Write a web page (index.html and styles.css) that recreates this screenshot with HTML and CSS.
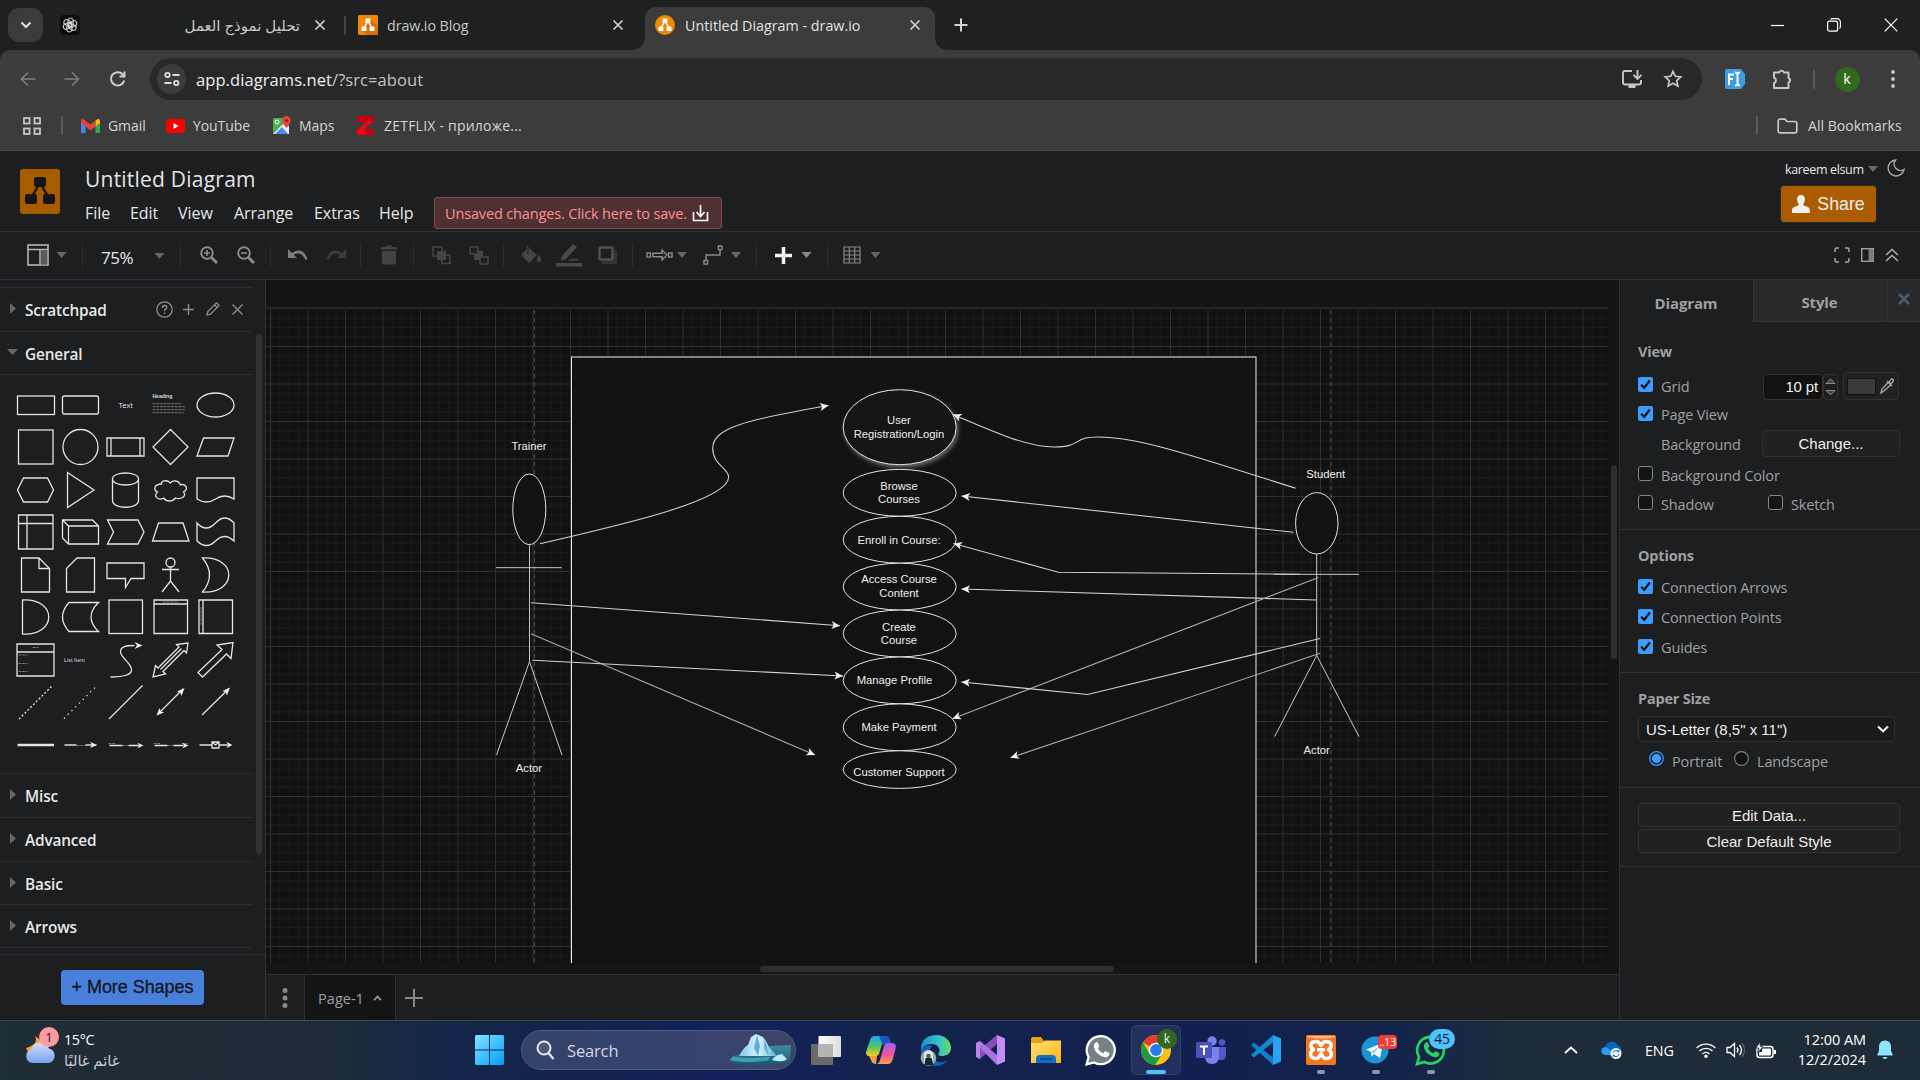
FILE: index.html
```html
<!DOCTYPE html>
<html lang="en">
<head>
<meta charset="utf-8">
<title>Untitled Diagram - draw.io</title>
<link rel="stylesheet" href="styles.css">
</head>
<body>
<svg class="defs" aria-hidden="true">
  <symbol id="x" viewBox="0 0 12 12"><path d="M1.500 1.500l9 9M10.500 1.500l-9 9" fill="none" stroke="currentColor" stroke-width="1.700"/></symbol>
  <symbol id="caret" viewBox="0 0 10 6"><path d="M0 0h10L5 6z" fill="currentColor"/></symbol>
  <symbol id="drawio" viewBox="0 0 20 20"><path d="M10 6L6 13M10 6l4 7" stroke="#fff" stroke-width="1.500"/><rect x="7.500" y="3.500" width="5" height="4.500" rx=".6" fill="#fff"/><rect x="3.500" y="11.500" width="5" height="4.500" rx=".6" fill="#fff"/><rect x="11.500" y="11.500" width="5" height="4.500" rx=".6" fill="#fff"/></symbol>
  <symbol id="check" viewBox="0 0 15 15"><rect width="15" height="15" rx="2" fill="#3d9dfd"/><path d="M3.200 7.800l3 3 5.600-7.300" fill="none" stroke="#111" stroke-width="2.200"/></symbol>
  <symbol id="uncheck" viewBox="0 0 15 15"><rect x=".5" y=".5" width="14" height="14" rx="2.500" fill="#141414" stroke="#858585"/></symbol>
  <symbol id="phone" viewBox="0 0 24 24"><path d="M8.200 6.400c.5-.5 1.100-.5 1.400.1l1 2.100c.2.4.1.8-.2 1.100l-.7.9c.9 1.800 2.200 3 4.100 3.800l.9-1.100c.3-.4.7-.4 1.100-.2l2 1c.5.3.6.7.4 1.200-.6 1.700-2.100 2.400-3.800 2-4-1-6.700-3.600-7.700-7.300-.4-1.500.4-2.900 1.500-3.600z"/></symbol>
</svg>

<header class="tabstrip">
  <button class="tab-search"><svg width="12" height="8" viewBox="0 0 12 8"><path d="M1.500 1.500L6 6l4.500-4.500" fill="none" stroke="#e3e3e3" stroke-width="2"/></svg></button>
  <div class="tab tab-gpt">
    <svg width="20" height="20" viewBox="0 0 20 20"><rect width="20" height="20" rx="4" fill="#0c0c0c"/><g fill="none" stroke="#d8d8d8" stroke-width="1"><rect x="8" y="3" width="5.200" height="8.500" rx="2.600"/><rect x="8" y="3" width="5.200" height="8.500" rx="2.600" transform="rotate(60 10 10)"/><rect x="8" y="3" width="5.200" height="8.500" rx="2.600" transform="rotate(120 10 10)"/><rect x="8" y="3" width="5.200" height="8.500" rx="2.600" transform="rotate(180 10 10)"/><rect x="8" y="3" width="5.200" height="8.500" rx="2.600" transform="rotate(240 10 10)"/><rect x="8" y="3" width="5.200" height="8.500" rx="2.600" transform="rotate(300 10 10)"/></g></svg>
    <span class="tab-title" dir="rtl" lang="ar">تحليل نموذج العمل</span>
    <svg class="close" width="12" height="12"><use href="#x"/></svg>
  </div>
  <div class="tab tab-blog">
    <svg width="20" height="20" viewBox="0 0 20 20"><rect width="20" height="20" rx="1.500" fill="#f08705"/><path d="M12 4l8 7v9H9l-5-4z" fill="#df6c0c"/><use href="#drawio"/></svg>
    <span class="tab-title">draw.io Blog</span>
    <svg class="close" width="12" height="12"><use href="#x"/></svg>
  </div>
  <div class="tab tab-active">
    <svg width="20" height="20" viewBox="0 0 20 20"><circle cx="10" cy="10" r="10" fill="#f08705"/><use href="#drawio"/></svg>
    <span class="tab-title">Untitled Diagram - draw.io</span>
    <svg class="close" width="12" height="12"><use href="#x"/></svg>
  </div>
  <svg class="mid" width="14" height="14" viewBox="0 0 14 14"><path d="M7 .5v13M.5 7h13" stroke="#d5d5d5" stroke-width="2"/></svg>
  <i></i>
  <svg class="mid" width="13" height="13" viewBox="0 0 13 13"><path d="M0 6.500h13" stroke="#fff" stroke-width="1.200"/></svg>
  <svg class="mid" width="14" height="14" viewBox="0 0 14 14"><rect x=".6" y="3.200" width="10" height="10" rx="2" fill="none" stroke="#fff" stroke-width="1.200"/><path d="M3.500 1.500q.5-.9 2-.9h4.500a3.400 3.400 0 0 1 3.400 3.400v4.500q0 1.500-1 2" fill="none" stroke="#fff" stroke-width="1.100"/></svg>
  <svg class="mid" width="14" height="14" viewBox="0 0 14 14"><path d="M.7.7l12.600 12.600M13.300.7L.7 13.300" stroke="#fff" stroke-width="1.200"/></svg>
</header>

<nav class="navbar">
  <svg width="16" height="16" viewBox="0 0 16 16"><path d="M15.500 8H1.500M8 1.500L1.500 8 8 14.500" fill="none" stroke="#7d7d7d" stroke-width="1.700"/></svg>
  <svg width="16" height="16" viewBox="0 0 16 16"><path d="M.5 8h14M8 1.500L14.500 8 8 14.500" fill="none" stroke="#7d7d7d" stroke-width="1.700"/></svg>
  <svg width="18" height="18" viewBox="0 0 18 18"><path d="M15.200 10.500a6.700 6.700 0 1 1-1.600-6.200L15.500 6.500M15.500 1.500v5h-5" fill="none" stroke="#d0d0d0" stroke-width="2"/></svg>
  <div class="omnibox">
    <span class="site-info"><svg width="16" height="16" viewBox="0 0 16 16"><g fill="none" stroke="#dcdcdc" stroke-width="1.800"><circle cx="3.500" cy="4" r="2.200"/><path d="M8.500 4h7M.5 12h7"/><circle cx="12.300" cy="12" r="2.200"/></g></svg></span>
    <span class="url"><b>app.diagrams.net</b>/?src=about</span>
    <svg width="22" height="20" viewBox="0 0 22 20"><path d="M11 2H4a2 2 0 0 0-2 2v9.500a2 2 0 0 0 2 2h14a2 2 0 0 0 2-2V11" fill="none" stroke="#c7c7c7" stroke-width="1.900"/><path d="M7.500 15.500h7V19h-7z" fill="#c7c7c7"/><path d="M16.500 1v8M12.500 5.800l4 4 4-4" fill="none" stroke="#c7c7c7" stroke-width="1.900"/></svg>
    <svg width="20" height="20" viewBox="0 0 20 20"><path d="M10 2.300l2.300 5 5.500.6-4.100 3.700 1.200 5.500L10 14.300l-4.900 2.800 1.200-5.500L2.200 7.900l5.500-.6z" fill="none" stroke="#c7c7c7" stroke-width="1.700"/></svg>
  </div>
  <svg width="22" height="22" viewBox="0 0 22 22"><path d="M3 1h14l4 5v10l-4 5H3a2 2 0 0 1-2-2V3a2 2 0 0 1 2-2z" fill="#3d9fe0"/><path d="M5 17V6.500h5M5 11h4M11 4.500q2.500 0 2.500 2v9q0 2-2.500 2M16 4.500q-2.500 0-2.500 2v9q0 2 2.500 2" fill="none" stroke="#fff" stroke-width="1.900"/></svg>
  <svg width="22" height="22" viewBox="0 0 22 22"><path d="M3 4.500h5.200a2.500 2.500 0 0 1 4.800 0h4.500V10a2.400 2.400 0 0 1 0 4.500v5.500H3v-5a2.700 2.700 0 0 0 0-5.200z" fill="none" stroke="#c7c7c7" stroke-width="2" stroke-linejoin="round"/></svg>
  <i class="vsep"></i>
  <span class="avatar">k</span>
  <svg width="4" height="18" viewBox="0 0 4 18" fill="#c7c7c7"><circle cx="2" cy="2" r="1.900"/><circle cx="2" cy="9" r="1.900"/><circle cx="2" cy="16" r="1.900"/></svg>
</nav>

<nav class="bookmarks">
  <svg class="apps" width="18" height="18" viewBox="0 0 18 18" fill="none" stroke="#c7c7c7" stroke-width="1.800"><rect x="1" y="1" width="5.500" height="5.500"/><rect x="11.500" y="1" width="5.500" height="5.500"/><rect x="1" y="11.500" width="5.500" height="5.500"/><rect x="11.500" y="11.500" width="5.500" height="5.500"/></svg>
  <i class="vsep"></i>
  <a class="bm"><svg width="19" height="14" viewBox="0 0 19 14"><path d="M0 2v11a1 1 0 0 0 1 1h3.500V5z" fill="#4285f4"/><path d="M19 2v11a1 1 0 0 1-1 1h-3.500V5z" fill="#34a853"/><path d="M14.500 1.500l2-1.300Q19-.5 19 2.200V4l-4.500 3.500z" fill="#fbbc04"/><path d="M0 2.200Q0-.5 2.500.2l7 5.300 5-4v6l-5 3.800L0 4z" fill="#ea4335"/></svg>Gmail</a>
  <a class="bm"><svg width="19" height="14" viewBox="0 0 19 14"><rect width="19" height="14" rx="4" fill="#f00"/><path d="M7.500 4v6l5-3z" fill="#fff"/></svg>YouTube</a>
  <a class="bm"><svg width="18" height="19" viewBox="0 0 18 19"><rect y="2" width="16" height="16" rx="1.500" fill="#4caf50"/><path d="M0 18L12 6l4 5v7z" fill="#eee"/><path d="M2 18l7-7 6 7z" fill="#4a8af4"/><circle cx="4" cy="6" r="2" fill="none" stroke="#fff"/><path d="M13.500 12Q9 7 9 4.500a4.400 4.400 0 0 1 8.800 0Q17.800 7 13.500 12z" fill="#e8453c"/><circle cx="13.500" cy="4.500" r="1.600" fill="#8e1b14"/></svg>Maps</a>
  <a class="bm zet"><svg width="17" height="19" viewBox="0 0 17 19"><path d="M0 0h17v5L7 13h10v6H0v-5l9-8H0z" fill="#f50514"/><path d="M0 0h17v5h-8v1H0zM7 13h10v6h-8z" fill="#c80010"/></svg>ZETFLIX - приложе...</a>
  <i></i>
  <i class="vsep"></i>
  <a class="bm all"><svg width="21" height="16" viewBox="0 0 21 16"><path d="M3 1.200h5l2 2.300h8a1.800 1.800 0 0 1 1.800 1.800V13a1.800 1.800 0 0 1-1.800 1.800H3A1.800 1.800 0 0 1 1.200 13V3A1.800 1.800 0 0 1 3 1.200z" fill="none" stroke="#c7c7c7" stroke-width="1.700"/></svg>All Bookmarks</a>
</nav>

<section class="apphead">
  <svg class="logo" width="40" height="45" viewBox="0 0 40 45"><rect width="40" height="45" rx="3" fill="#a85c00"/><path d="M20 14L11 29M20 14l9 15" stroke="#161616" stroke-width="2.400"/><rect x="14" y="8" width="12" height="10" rx="2" fill="#161616"/><rect x="5" y="25" width="12" height="10" rx="2" fill="#161616"/><rect x="23" y="25" width="12" height="10" rx="2" fill="#161616"/></svg>
  <div class="head-mid">
    <h1>Untitled Diagram</h1>
    <div class="menus">
      <span>File</span><span>Edit</span><span>View</span><span>Arrange</span><span>Extras</span><span>Help</span>
      <div class="unsaved"><span>Unsaved changes. Click here to save.</span><svg width="17" height="17" viewBox="0 0 17 17"><path d="M1.500 7v8.500h14V7M8.500 0v11M4.500 7l4 4.500 4-4.500" fill="none" stroke="#fff" stroke-width="1.600"/></svg></div>
    </div>
  </div>
  <div class="head-right">
    <div class="user"><span>kareem elsum</span><svg width="10" height="6" color="#6a6a6a"><use href="#caret"/></svg><svg class="moon" width="18" height="18" viewBox="0 0 18 18"><path d="M8.500 1A8 8 0 1 0 17 10.500 6.500 6.500 0 0 1 8.500 1z" fill="none" stroke="#a8a8a8" stroke-width="1.400"/></svg></div>
    <button class="share"><svg width="18" height="18" viewBox="0 0 18 18"><path d="M9 0c3 0 4.200 2.200 3.800 5-.3 2-.8 3-1.500 4 0 1.300.4 1.600 1.700 2 3 .9 5 1.300 5 5v2H0v-2c0-3.700 2-4.100 5-5 1.300-.4 1.700-.7 1.700-2-.7-1-1.200-2-1.500-4C4.800 2.200 6 0 9 0z" fill="#efefef"/></svg>Share</button>
  </div>
</section>

<section class="toolbar">
  <div class="tg g1"><svg width="22" height="22" viewBox="0 0 22 22"><rect x="1" y="1" width="20" height="20" fill="none" stroke="#b5b5b5" stroke-width="1.600"/><path d="M1 5.500h20M13 5.500V21" stroke="#b5b5b5" stroke-width="1.500"/><rect x="14" y="6" width="6" height="14.500" fill="#5c5c5c"/></svg><svg class="car" width="11" height="6"><use href="#caret"/></svg></div>
  <div class="tg g2"><span class="pct">75%</span><svg class="car" width="11" height="6"><use href="#caret"/></svg></div>
  <div class="tg g3"><svg width="18" height="18" viewBox="0 0 18 18" fill="none" stroke="#8c8c8c"><circle cx="7" cy="7" r="5.800" stroke-width="1.900"/><path d="M11.500 11.500l5.500 5.500" stroke-width="3"/><path d="M7 4v6M4 7h6" stroke-width="1.600"/></svg><svg width="18" height="18" viewBox="0 0 18 18" fill="none" stroke="#8c8c8c"><circle cx="7" cy="7" r="5.800" stroke-width="1.900"/><path d="M11.500 11.500l5.500 5.500" stroke-width="3"/><path d="M4 7h6" stroke-width="1.600"/></svg></div>
  <div class="tg g4"><svg width="20" height="12" viewBox="0 0 20 12"><path d="M0 0v9h9L5.700 5.700Q13 1 17.500 11l2-.7Q15-3 4 4z" fill="#7e7e7e"/></svg><svg width="20" height="12" viewBox="0 0 20 12"><path d="M20 0v9h-9l3.300-3.300Q7 1 2.500 11l-2-.7Q5-3 16 4z" fill="#3c3c3c"/></svg></div>
  <div class="tg g5"><svg width="18" height="20" viewBox="0 0 18 20" fill="#424242"><path d="M1 2h4.500L7 .5h4L12.500 2H17v2.500H1zM2 6h14v11.500q0 2-2 2H4q-2 0-2-2z"/></svg></div>
  <div class="tg g6"><svg width="20" height="19" viewBox="0 0 20 19"><path d="M1 1h9v9H1zM10 14v3.500h8V9h-4" fill="none" stroke="#454545" stroke-width="1.500"/><rect x="5" y="5" width="9" height="9" fill="#454545"/></svg><svg width="20" height="19" viewBox="0 0 20 19"><rect x="5" y="5" width="9" height="9" fill="#454545"/><path d="M1 1h8v7H1zM11 11h8v7h-8z" fill="#1d1e20" stroke="#454545" stroke-width="1.600"/></svg></div>
  <div class="tg g7"><svg width="22" height="20" viewBox="0 0 22 20"><path d="M7 0l2 3 8 7-8 8-8-8 6-6.500zM19 10q4.500 6 0 7.500-4.500-1.500 0-7.500z" fill="#454545"/><path d="M8 3v6" stroke="#1d1e20"/></svg><svg width="26" height="24" viewBox="0 0 26 24" fill="#4a4a4a"><path d="M17 1l4 3L10 16l-5 2 1-5z"/><path d="M14 16h8v1.500h-10z"/><path d="M0 20h26v3.500H0z"/></svg><svg width="19" height="18" viewBox="0 0 19 18"><rect x="4" y="4" width="15" height="14" fill="#333"/><rect x="1.500" y="1.500" width="13" height="12" rx="1" fill="#1d1e20" stroke="#505050" stroke-width="2.500"/></svg></div>
  <div class="tg g8"><svg width="27" height="12" viewBox="0 0 27 12" fill="none" stroke="#8a8a8a" stroke-width="1.400"><rect x="1" y="4" width="3.500" height="4"/><path d="M7 4.200h9V1l5 5-5 5V7.800H7z"/><rect x="22.500" y="4" width="3.500" height="4"/></svg><svg class="car" width="10" height="6"><use href="#caret"/></svg><i></i><svg width="20" height="20" viewBox="0 0 20 20" fill="none" stroke="#8a8a8a" stroke-width="1.400"><path d="M3 15.500V10h14V4.500"/><rect x="1" y="15.500" width="3.600" height="3.600"/><rect x="15.400" y="1" width="3.600" height="3.600"/></svg><svg class="car" width="10" height="6"><use href="#caret"/></svg></div>
  <div class="tg g9"><svg width="17" height="17" viewBox="0 0 17 17"><path d="M8.500 0v17M0 8.500h17" stroke="#f4f4f4" stroke-width="3.500"/></svg><svg class="car lit" width="11" height="6"><use href="#caret"/></svg></div>
  <div class="tg g10"><svg width="18" height="18" viewBox="0 0 18 18"><path d="M1 1h16v16H1zM6.300 1v16M11.700 1v16M1 5h16M1 9h16M1 13h16" fill="none" stroke="#858585" stroke-width="1.200"/></svg><svg class="car" width="11" height="6"><use href="#caret"/></svg></div>
  <div class="tool-end">
    <svg width="16" height="16" viewBox="0 0 16 16" fill="none" stroke="#a8a8a8" stroke-width="1.500"><path d="M1 5V2.500A1.500 1.500 0 0 1 2.500 1H5M11 1h2.500A1.500 1.500 0 0 1 15 2.500V5M15 11v2.500a1.500 1.500 0 0 1-1.500 1.500H11M5 15H2.500A1.500 1.500 0 0 1 1 13.500V11"/></svg>
    <svg width="13" height="14" viewBox="0 0 13 14"><rect x=".7" y=".7" width="11.600" height="12.600" fill="none" stroke="#a0a0a0" stroke-width="1.400"/><rect x="7.500" y="1" width="5" height="12" fill="#7c7c7c"/></svg>
    <svg width="14" height="14" viewBox="0 0 14 14"><path d="M1 7l6-5.500L13 7M1 13l6-5.500L13 13" fill="none" stroke="#b0b0b0" stroke-width="1.500"/></svg>
  </div>
</section>

<main class="work">
  <aside class="sidebar">
    <div class="palettes">
      <div class="row scratch"><svg class="tri" width="6" height="11" viewBox="0 0 6 11"><path d="M0 0l6 5.500L0 11z"/></svg><span>Scratchpad</span>
        <svg width="17" height="17" viewBox="0 0 17 17"><circle cx="8.500" cy="8.500" r="7.700" fill="none" stroke="#8d8d8d" stroke-width="1.300"/><path d="M6.300 6.800q0-2.300 2.200-2.300t2.200 2q0 1-1.300 1.900-.9.600-.9 1.600M8.500 11.500v1.600" fill="none" stroke="#8d8d8d" stroke-width="1.400"/></svg>
        <svg width="11" height="11" viewBox="0 0 11 11"><path d="M5.500 0v11M0 5.500h11" stroke="#8d8d8d" stroke-width="1.400"/></svg>
        <svg width="14" height="14" viewBox="0 0 14 14"><path d="M1 13l.8-3.500 8.700-8.700 2.700 2.700-8.700 8.700zM8.500 2.800l2.700 2.700" fill="none" stroke="#8d8d8d" stroke-width="1.300"/></svg>
        <svg width="11" height="11" viewBox="0 0 11 11"><path d="M.5.5l10 10M10.500.5l-10 10" stroke="#8d8d8d" stroke-width="1.400"/></svg>
      </div>
      <div class="row general"><svg class="tri" width="11" height="6" viewBox="0 0 11 6"><path d="M0 0h11L5.500 6z"/></svg><span>General</span></div>
      <div class="shapes">
        <svg viewBox="-22.500 -21 45 42"><rect x="-18" y="-9" width="37" height="18.500"/></svg>
        <svg viewBox="-22.500 -21 45 42"><rect x="-18" y="-9" width="36" height="18" rx="2"/></svg>
        <svg viewBox="-22.500 -21 45 42"><text y="2.500" font-size="7.800" text-anchor="middle">Text</text></svg>
        <svg viewBox="-22.500 -21 45 42"><text x="-18" y="-7" font-size="5" font-weight="700">Heading</text><path class="faint" d="M-18-1.300h29M-18 1.700h33M-18 4.700h33M-18 7.700h31"/></svg>
        <svg viewBox="-22.500 -21 45 42"><ellipse rx="18.500" ry="12"/></svg>

        <svg viewBox="-22.500 -21 45 42"><rect x="-17" y="-17" width="34.500" height="34"/></svg>
        <svg viewBox="-22.500 -21 45 42"><circle r="17.500"/></svg>
        <svg viewBox="-22.500 -21 45 42"><path d="M-18.500-9h37V9h-37zM-14.500-9V9M14.500-9V9"/></svg>
        <svg viewBox="-22.500 -21 45 42"><path d="M0-17.500L17.500 0 0 17.500-17.500 0z"/></svg>
        <svg viewBox="-22.500 -21 45 42"><path d="M-12-9h30.500L12.500 9h-31z"/></svg>

        <svg viewBox="-22.500 -21 45 42"><path d="M-12-12h24l6 12-6 12h-24l-6-12z"/></svg>
        <svg viewBox="-22.500 -21 45 42"><path d="M-13-17.500L13.500 0-13 17.500z"/></svg>
        <svg viewBox="-22.500 -21 45 42"><path d="M-13-11v21.500c0 9 26 9 26 0V-11M-13-11c0-8 26-8 26 0s-26 8-26 0z"/></svg>
        <svg viewBox="-22.500 -21 45 42"><path d="M-9-6C-16-6-18 0-13 2c-5 4 1 9 6 6 3 4 9 4 12 0 5 2 12-2 8-6 6-3 2-9-3-7-2-5-8-5-10-2-4-4-10-2-9 1z"/></svg>
        <svg viewBox="-22.500 -21 45 42"><path d="M-18.500-12h37V9Q9 3 0 9t-18.500 0z"/></svg>

        <svg viewBox="-22.500 -21 45 42"><path d="M-17-17h34.500v34H-17zM-17-8.500h34.500M-8.500-17v34"/></svg>
        <svg viewBox="-22.500 -21 45 42"><path d="M-18-12h30l6 6v18h-30l-6-6zM-18-12l6 6h30M-12-6v18"/></svg>
        <svg viewBox="-22.500 -21 45 42"><path d="M-18-12h30.500l6 12-6 12H-18l6-12z"/></svg>
        <svg viewBox="-22.500 -21 45 42"><path d="M-12-9h24.500l6 18h-36.500z"/></svg>
        <svg viewBox="-22.500 -21 45 42"><path d="M-18.500-9q9 10 18.500 0t18.500 0V9Q9 0 0 9t-18.500 0z"/></svg>

        <svg viewBox="-22.500 -21 45 42"><path d="M-14-17H3.500l10.500 10.500V17H-14zM3.500-17v10.500H14"/></svg>
        <svg viewBox="-22.500 -21 45 42"><path d="M-3.500-17h17.500v34H-14V-6.500z"/></svg>
        <svg viewBox="-22.500 -21 45 42"><path d="M-18.500-12h37V3.500H5.500L0 12.500v-9h-18.500z"/></svg>
        <svg viewBox="-22.500 -21 45 42"><circle cy="-12.500" r="4.500"/><path d="M0-8V6M-8.500-5.500h17M0 6l-8.500 11M0 6l8.500 11"/></svg>
        <svg viewBox="-22.500 -21 45 42"><path d="M-13-17c35-2 35 36 0 34q14-17 0-34z"/></svg>

        <svg viewBox="-22.500 -21 45 42"><path d="M-13-17c35-2 35 36 0 34z"/></svg>
        <svg viewBox="-22.500 -21 45 42"><path d="M-11.500-14.500h29.500q-15 14.500 0 29h-29.500q-13-14.500 0-29z"/></svg>
        <svg viewBox="-22.500 -21 45 42"><rect x="-16.500" y="-17" width="33.500" height="33.500"/></svg>
        <svg viewBox="-22.500 -21 45 42"><path d="M-16.500-17h33.500v33.500h-33.500zM-16.500-13h33.500"/><path class="faint" d="M-8-15h16"/></svg>
        <svg viewBox="-22.500 -21 45 42"><path d="M-16.500-17h33.500v33.500h-33.500zM-12.500-17v33.500"/><path class="faint" d="M-14.500-10V8"/></svg>

        <svg viewBox="-22.500 -21 45 42"><path d="M-18.500-16h37v32h-37zM-18.500-8h37"/><path class="faint" d="M-3-12.500h6M-17-5h9M-17 3.500h9M-17 11.500h9"/></svg>
        <svg viewBox="-22.500 -21 45 42"><text x="-16.500" y="1.500" font-size="5.500">List Item</text></svg>
        <svg viewBox="-22.500 -21 45 42"><path d="M-15 17c12 0 22-2 21-8S-5-3-5-8c0-5 4-6.500 14-6.500"/><path class="solid" d="M17-14.500l-8-3.500 2.500 3.500L9-11z"/></svg>
        <svg viewBox="-22.500 -21 45 42"><path d="M17.500-17l-1.500 10-2.500-2.500-21 21 2.500 2.500-12.500 3 2.500-11.500 2.500 2.500 21-21-2.500-2.500zM11-11.500L-10 9.500"/></svg>
        <svg viewBox="-22.500 -21 45 42"><path d="M17.500-17.500l-2 16-4.500-4.500-24 23-4.500-4.500L6.500-10.500 1.500-15z"/></svg>

        <svg viewBox="-22.500 -21 45 42"><path d="M-16.500 17l33.500-33.500" stroke-dasharray="2 2"/></svg>
        <svg viewBox="-22.500 -21 45 42"><path d="M-16.500 16.500l32-32" stroke-dasharray="1.300 4"/></svg>
        <svg viewBox="-22.500 -21 45 42"><path d="M-16.500 17l33.500-33.500"/></svg>
        <svg viewBox="-22.500 -21 45 42"><path d="M-13 12.500L12.500-13"/><path class="solid" d="M14-14l-3 8-1.200-3.200L6.500-10.500zM-14 13.500l3-7.500 1.200 3.200 3.300 1.300z"/></svg>
        <svg viewBox="-22.500 -21 45 42"><path d="M-13.500 13L13-13"/><path class="solid" d="M14.500-14.500l-3 8-1.200-3.200L7-11z"/></svg>

        <svg viewBox="-22.500 -21 45 42"><path d="M-18 0H18.500" stroke-width="2.600"/></svg>
        <svg viewBox="-22.500 -21 45 42"><path d="M-16 0h12M5 0h7"/><path class="faint" d="M-4 .5h9"/><path class="solid" d="M17 0L9.500-3 11.500 0 9.500 3z"/></svg>
        <svg viewBox="-22.500 -21 45 42"><path d="M-16 .5h13M3 .5h10"/><path class="faint" d="M-17-1.500h7M-3 .5h6"/><path class="solid" d="M18 .5l-6-2.700 1.500 2.700-1.500 2.700z"/></svg>
        <svg viewBox="-22.500 -21 45 42"><path d="M-16 .5h13M3 .5h10"/><path class="faint" d="M-17-1.500h7M-3 .5h6M11-1.500h6"/><path class="solid" d="M18 .5l-6-2.700 1.500 2.700-1.500 2.700z"/></svg>
        <svg viewBox="-22.500 -21 45 42"><path d="M-16 0h12M4 0h8M-3.500-3h7v6h-7zM-3-2.500L0 0l3-2.500"/><path class="solid" d="M17 0L11-3l1.500 3L11 3z"/></svg>
      </div>
      <div class="row"><svg class="tri" width="6" height="11" viewBox="0 0 6 11"><path d="M0 0l6 5.500L0 11z"/></svg><span>Misc</span></div>
      <div class="row"><svg class="tri" width="6" height="11" viewBox="0 0 6 11"><path d="M0 0l6 5.500L0 11z"/></svg><span>Advanced</span></div>
      <div class="row"><svg class="tri" width="6" height="11" viewBox="0 0 6 11"><path d="M0 0l6 5.500L0 11z"/></svg><span>Basic</span></div>
      <div class="row"><svg class="tri" width="6" height="11" viewBox="0 0 6 11"><path d="M0 0l6 5.500L0 11z"/></svg><span>Arrows</span></div>
    </div>
    <div class="side-scroll"></div>
    <div class="side-foot"><button class="more">+ More Shapes</button></div>
  </aside>

  <section class="center">
    <svg class="canvas" width="1353" height="694" viewBox="266 280 1353 694">
      <defs>
        <pattern id="grid" x="270" y="308.500" width="37.500" height="37.500" patternUnits="userSpaceOnUse">
          <path d="M9.800 0v37.500M19.300 0v37.500M28.500 0v37.500M0 9.800h37.500M0 19.300h37.500M0 28.500h37.500" stroke="#1b1b1b"/>
          <path d="M.5 0v37.500M0 .5h37.500" stroke="#303030"/>
        </pattern>
        <marker id="arr" markerUnits="userSpaceOnUse" markerWidth="10" markerHeight="8" refX="9" refY="4" orient="auto"><path d="M9 4L.5 0 2.700 4 .5 8z" fill="#f0f0f0"/></marker>
        <filter id="glow" x="-20%" y="-20%" width="150%" height="150%"><feDropShadow dx="1.600" dy="2.400" stdDeviation="2" flood-color="#aaa" flood-opacity=".6"/></filter>
        <clipPath id="view"><rect x="266" y="309" width="1342" height="654"/></clipPath>
      </defs>
      <rect x="266" y="280" width="1353" height="694" fill="#141414"/>
      <path d="M266 308h1342" stroke="#2b2b2b" stroke-width="1.500"/>
      <g clip-path="url(#view)">
        <rect x="266" y="310" width="1342" height="653" fill="#111"/>
        <rect x="266" y="310" width="1342" height="653" fill="url(#grid)"/>
        <path d="M534.500 310v653M1331 310v653" stroke="#4a4a4a" stroke-width="1.200" stroke-dasharray="4.500 3.500"/>
        <rect x="571.500" y="357" width="684.500" height="640" fill="#121212" stroke="#eee"/>
        <g fill="#121212" stroke="#e4e4e4" stroke-width="1">
          <ellipse cx="899.700" cy="427.200" rx="56.500" ry="37.500" filter="url(#glow)"/>
          <ellipse cx="899.700" cy="492.800" rx="56.500" ry="23.400"/>
          <ellipse cx="899.700" cy="539.700" rx="56.500" ry="23.400"/>
          <ellipse cx="899.700" cy="586.600" rx="56.500" ry="23.400"/>
          <ellipse cx="899.700" cy="633.500" rx="56.500" ry="23.400"/>
          <ellipse cx="899.700" cy="680.400" rx="56.500" ry="23.400"/>
          <ellipse cx="899.700" cy="727.300" rx="56.500" ry="23.400"/>
          <ellipse cx="899.700" cy="769.600" rx="56.500" ry="18.800"/>
          <ellipse cx="529.300" cy="509.300" rx="16.500" ry="35.300"/>
          <ellipse cx="1316.800" cy="523.300" rx="21.200" ry="30.700"/>
        </g>
        <g fill="none" stroke="#c9c9c9" stroke-width="1">
          <path d="M529.500 544.700v117M496 567.700h66M529.500 661.700L496.500 755M529.500 661.700L562 755"/>
          <path d="M1316.700 554v101.500M1274 574.300h85M1316.700 655.500l-42 81M1316.700 655.500l42.300 81"/>
        </g>
        <g class="edges" fill="none" stroke="#d2d2d2" stroke-width="1.100">
          <path d="M540 543.700C630 523 728 500 728.700 477C728.500 468 712.500 465 712.700 448C713 428 745 420 828.500 405.500"/>
          <path d="M531 602.700L840 625.700"/>
          <path d="M531 633.700L815 755" stroke="#a8a8a8"/>
          <path d="M532.500 660.300L843 676"/>
          <path d="M1295.700 488.300C1200 458 1140 437 1098 437C1072 437 1082 447 1054 447C1025 447 985 428 953 414.500"/>
          <path d="M1293.500 532.300L961.500 496"/>
          <path d="M1300 574.300L1058.300 572.300 953.500 543.500"/>
          <path d="M1316 600L961.500 589"/>
          <path d="M1318.500 577.500L952.500 718.700" stroke="#a8a8a8"/>
          <path d="M1320 638.500L1087.500 694.500 961.500 682"/>
          <path d="M1320 653.300L1010.500 757.700" stroke="#a8a8a8"/>
        </g>
        <g class="labels" text-anchor="middle">
          <text x="899" y="424">User</text><text x="899" y="438">Registration/Login</text>
          <text x="899" y="490">Browse</text><text x="899" y="503">Courses</text>
          <text x="899" y="544">Enroll in Course:</text>
          <text x="899" y="583">Access Course</text><text x="899" y="597">Content</text>
          <text x="899" y="631">Create</text><text x="899" y="644">Course</text>
          <text x="894.500" y="684">Manage Profile</text>
          <text x="899" y="731">Make Payment</text>
          <text x="899" y="776">Customer Support</text>
          <text x="529" y="450">Trainer</text><text x="529" y="772">Actor</text>
          <text x="1325.700" y="478">Student</text><text x="1316.700" y="754">Actor</text>
        </g>
      </g>
      <rect x="1611" y="465" width="6" height="194" rx="3" fill="#2e2e2e"/>
      <rect x="760" y="966" width="354" height="6" rx="3" fill="#2e2e2e"/>
    </svg>
    <div class="pages">
      <span class="dots"><svg width="6" height="20" viewBox="0 0 6 20" fill="#8a8a8a"><circle cx="3" cy="2.500" r="2.500"/><circle cx="3" cy="10" r="2.500"/><circle cx="3" cy="17.500" r="2.500"/></svg></span>
      <span class="page">Page-1<svg width="9" height="6" viewBox="0 0 9 6"><path d="M1 5.300L4.500 1.500 8 5.300" fill="none" stroke="#a0a0a0" stroke-width="1.600"/></svg></span>
      <span class="add"><svg width="18" height="18" viewBox="0 0 18 18"><path d="M9 0v18M0 9h18" stroke="#8a8a8a" stroke-width="2"/></svg></span>
    </div>
  </section>

  <aside class="format">
    <div class="ftabs"><span class="on">Diagram</span><span>Style</span><span class="fx"><svg width="12" height="12" viewBox="0 0 12 12"><path d="M1 1l10 10M11 1L1 11" stroke="#4b5b6e" stroke-width="2.800"/></svg></span></div>
    <section class="sec view">
      <h2>View</h2>
      <div class="opt r1"><svg class="cb"><use href="#check"/></svg><span>Grid</span><span class="num">10 pt</span><span class="spin"><svg width="11" height="6" viewBox="0 0 11 6"><path d="M1 5.500L5.500 1 10 5.500z" fill="#444" stroke="#888"/></svg><svg width="11" height="6" viewBox="0 0 11 6"><path d="M1 .5L5.500 5 10 .5z" fill="#444" stroke="#888"/></svg></span><span class="color"><i></i><svg width="14" height="16" viewBox="0 0 14 16"><path d="M1 15l1-4 6.500-7 2.500 2.500L4 13zM7 3l5 5M9 4.500l2-3q1-1 2 0t0 2l-2 2.500" fill="none" stroke="#aaa" stroke-width="1.300"/></svg></span></div>
      <div class="opt r2"><svg class="cb"><use href="#check"/></svg><span>Page View</span></div>
      <div class="opt r3"><span>Background</span><button class="btn">Change...</button></div>
      <div class="opt r4"><svg class="cb"><use href="#uncheck"/></svg><span>Background Color</span></div>
      <div class="opt r5"><svg class="cb"><use href="#uncheck"/></svg><span>Shadow</span><svg class="cb"><use href="#uncheck"/></svg><span>Sketch</span></div>
    </section>
    <section class="sec options">
      <h2>Options</h2>
      <div class="opt"><svg class="cb"><use href="#check"/></svg><span>Connection Arrows</span></div>
      <div class="opt"><svg class="cb"><use href="#check"/></svg><span>Connection Points</span></div>
      <div class="opt"><svg class="cb"><use href="#check"/></svg><span>Guides</span></div>
    </section>
    <section class="sec paper">
      <h2>Paper Size</h2>
      <div class="select">US-Letter (8,5" x 11")<svg width="12" height="8" viewBox="0 0 12 8"><path d="M1 1.500L6 6.300l5-4.800" fill="none" stroke="#f0f0f0" stroke-width="2.200"/></svg></div>
      <div class="radios"><svg width="15" height="15" viewBox="0 0 15 15"><circle cx="7.500" cy="7.500" r="6.800" fill="#111" stroke="#3d9dfd" stroke-width="1.300"/><circle cx="7.500" cy="7.500" r="4.700" fill="#3d9dfd"/></svg><span>Portrait</span><svg width="15" height="15" viewBox="0 0 15 15"><circle cx="7.500" cy="7.500" r="6.900" fill="#111" stroke="#858585" stroke-width="1.100"/></svg><span>Landscape</span></div>
    </section>
    <section class="sec acts"><button class="btn">Edit Data...</button><button class="btn">Clear Default Style</button></section>
  </aside>
</main>

<footer class="taskbar">
  <div class="weather">
    <svg width="38" height="38" viewBox="0 0 38 38"><defs><linearGradient id="cl" x2="0" y2="1"><stop stop-color="#cfdcff"/><stop offset="1" stop-color="#7ba4ee"/></linearGradient></defs><path d="M14 8q4 8-9 12 3 8 12 6t8-10z" fill="#f5a21c"/><path d="M11 35a7 7 0 0 1-1-13.500 9.500 9.500 0 0 1 18-1A7.500 7.500 0 0 1 28 35z" fill="url(#cl)"/></svg>
    <b class="wbadge">1</b>
    <div class="wtext"><span>15°C</span><span class="ar" dir="rtl" lang="ar">غائم غالبًا</span></div>
  </div>
  <svg class="win" width="29" height="30" viewBox="0 0 29 30"><defs><linearGradient id="wn" x2="1" y2="1"><stop stop-color="#8be0ff"/><stop offset=".5" stop-color="#3cc3ff"/><stop offset="1" stop-color="#0a98f5"/></linearGradient></defs><path d="M1 0h13v14.500H0V1zM15 0h13l1 1v13.500H15zM0 15.500h14V30H1l-1-1zM15 15.500h14V29l-1 1H15z" fill="url(#wn)"/></svg>
  <div class="search">
    <svg width="19" height="20" viewBox="0 0 19 20"><circle cx="8" cy="8" r="6.500" fill="#4d587d" stroke="#e8e8ee" stroke-width="2"/><path d="M12.500 13l5 6" stroke="#e8e8ee" stroke-width="2.300"/></svg><span>Search</span>
    <svg width="63" height="34" viewBox="0 0 63 34"><defs><linearGradient id="sea" x2="0" y2="1"><stop stop-color="#3b8fa0"/><stop offset="1" stop-color="#1c5672"/></linearGradient><linearGradient id="ice" x2="1"><stop stop-color="#7cc8ec"/><stop offset=".5" stop-color="#d8f3fc"/><stop offset="1" stop-color="#5fb0d8"/></linearGradient></defs><path d="M40 13l22-1-1 16q-8 4-28 4Q2 32 0 27q4-6 14-6z" fill="url(#sea)"/><path d="M10 23q4-8 9-11l3-8 5-3 7 3 3 4 3 6 8 9z" fill="url(#ice)"/><path d="M28 2l-3 13 4 8 2-10zM36 7l-1 8 5 8z" fill="#5fadd8"/><path d="M43 27q3-5 10-6l5 5q-4 4-15 1z" fill="#bfe9f7"/><path d="M4 23.500q16 3 37 0l-2 4Q14 31 1 27z" fill="#3f9db5"/></svg>
  </div>
  <div class="apps-row">
    <span><svg width="32" height="32" viewBox="0 0 32 32"><defs><linearGradient id="tv" x2="1"><stop stop-color="#fff"/><stop offset="1" stop-color="#ddd"/></linearGradient></defs><rect x="1" y="10" width="22" height="21" rx="1" fill="#6a6a6a"/><rect x="8.500" y="2" width="22.500" height="21" rx="1" fill="url(#tv)"/><rect x="8.500" y="10" width="14.500" height="13" fill="#b4b4b4"/></svg></span>
    <span><svg width="32" height="32" viewBox="0 0 32 32"><defs><linearGradient id="ca" x2="0" y2="1"><stop stop-color="#19a9e8"/><stop offset=".5" stop-color="#4ec16b"/><stop offset="1" stop-color="#f4d01c"/></linearGradient><linearGradient id="cb2" x2="0" y2="1"><stop stop-color="#a45cf0"/><stop offset=".55" stop-color="#f0569a"/><stop offset="1" stop-color="#ff9d52"/></linearGradient></defs><path d="M10 2h12q-3 1-4 5l-4 13q-1 2-3 2H4q-3 0-3-4L5 6q1-4 5-4z" fill="url(#ca)"/><path d="M14 2h7q3 0 4 4l1 3h-5q-2 0-3 3z" fill="#1a57c8"/><path d="M21 9h6q5 0 3.500 6l-3 11q-1 4-5 4H11q3 0 4-4l4-14q1-3 2-3z" fill="url(#cb2)"/><path d="M4 22h8l-1 8q-4 0-5-4z" fill="#f5a13e"/></svg></span>
    <span><svg width="32" height="32" viewBox="0 0 32 32"><defs><linearGradient id="ed" x2="1"><stop stop-color="#1b8ddd"/><stop offset=".6" stop-color="#35c1c8"/><stop offset="1" stop-color="#6be05a"/></linearGradient></defs><path d="M1 14C1 6 8 1 16 1c9 0 15 6 15 13 0 6-5 8-9 8-3 0-5-1-3-3 2-5-2-9-7-9-6 0-11 3-11 10z" fill="url(#ed)"/><path d="M12 12q-4 5-1 11t12 5q3-.5 5-2-5 6-13 6Q1 30 1 17q3-7 11-5z" fill="#1561b5"/><circle cx="8.500" cy="24" r="7.800" fill="#99a9ad"/><path d="M4 19q4-6 9 0v11H4z" fill="#dce8e7"/><path d="M5.500 24h6l2 7h-9z" fill="#1b2430"/><circle cx="8.500" cy="22" r="2.300" fill="#465"/></svg></span>
    <span><svg width="32" height="32" viewBox="0 0 32 32"><path d="M22 1l8 3.500v23L22 31z" fill="#c58ef6"/><path d="M22 1v9L5 25l-4-2.500 3-6.500z" fill="#8450b8"/><path d="M5 7l17 14v10L1 10z" fill="#a875e0"/><path d="M1 9l4-2v18l-4-2z" fill="#bb86f2"/></svg></span>
    <span><svg width="32" height="32" viewBox="0 0 32 32"><defs><linearGradient id="fo" x2="1" y2="1"><stop stop-color="#ffe07a"/><stop offset="1" stop-color="#f9b50e"/></linearGradient></defs><path d="M1 5q0-2 2-2h8l3 4H31v8H1z" fill="#e3a20e"/><path d="M1 9h11l3-2.500h16V29H1z" fill="url(#fo)"/><path d="M6 29v-4q0-4 4-4h12q4 0 4 4v4z" fill="#0d70c4"/><path d="M10 25h12" stroke="#083f80" stroke-width="1.500"/></svg></span>
    <span><svg width="32" height="32" viewBox="0 0 24 24"><path d="M1.200 22.800l1.500-5.500A10.500 10.500 0 1 1 6.800 21.300z" fill="#778287" stroke="#fff" stroke-width="1.700"/><use href="#phone" fill="#fff"/></svg></span>
    <span class="cur run"><svg width="32" height="32" viewBox="0 0 32 32"><circle cx="16" cy="16" r="15" fill="#fbc116"/><path d="M16 16L3 8.500A15 15 0 0 1 29 8.500H16z" fill="#e33b2e"/><path d="M3 8.500A15 15 0 0 0 15 31l7.500-11.500L16 16 9.500 19.700z" fill="#229a45"/><circle cx="16" cy="16" r="7.300" fill="#fff"/><circle cx="16" cy="16" r="5.900" fill="#2b7bf0"/></svg><b class="kbadge">k</b></span>
    <span><svg width="32" height="32" viewBox="0 0 32 32"><circle cx="17" cy="7" r="4.700" fill="#7b83eb"/><circle cx="27" cy="8.500" r="3.200" fill="#5059c9"/><path d="M22 13h9v8q0 5-5 5t-5-4z" fill="#5059c9"/><path d="M10 13h14v9q0 8-7 8t-7-8z" fill="#7b83eb"/><rect x="1" y="8" width="16" height="16" rx="1.500" fill="#4a52bd"/><path d="M5 12.500h8M9 12.500V21" stroke="#fff" stroke-width="2"/></svg></span>
    <span><svg width="32" height="32" viewBox="0 0 32 32"><path d="M1 11l3-2.500 19 15V31z" fill="#0f7fc9"/><path d="M1 21l3 2.500 19-15V1z" fill="#1387d2"/><path d="M23 1l8 3.500v23L23 31z" fill="#27a4f2"/></svg></span>
    <span class="run"><svg width="32" height="32" viewBox="0 0 32 32"><rect x="1" y="1" width="30" height="30" rx="2" fill="#f37623"/><path d="M2 3q14 3 28 0V2H2z" fill="#ffb98a"/><path d="M11.500 7.500c-7 0-7 5.500-3 8-4.500 3-4 9 3 9 3 0 3-3.500 4.500-5 1.500 1.500 1.500 5 4.500 5 7 0 7.500-6 3-9 4-2.500 4-8-3-8-3 0-3 3-4.500 4-1.500-1-1.500-4-4.500-4zM12 15.800h8" fill="none" stroke="#fff" stroke-width="3.500" stroke-linejoin="round"/></svg></span>
    <span class="run"><svg width="32" height="32" viewBox="0 0 32 32"><circle cx="15" cy="16" r="13.500" fill="#1c93d4"/><path d="M6 15.500L23 9l-3 15-6-4-2.500 2.500-.5-4.500z" fill="#fff"/><path d="M11 18l9-6.500-6 8z" fill="#9cc9e5"/></svg><b class="tbadge">..13</b></span>
    <span class="run"><svg width="32" height="32" viewBox="0 0 24 24"><path d="M1.500 22.500l1.500-5.300A10 10 0 1 1 7 21z" fill="none" stroke="#25d366" stroke-width="2"/><use href="#phone" fill="#25d366"/></svg><b class="wabadge">45</b></span>
  </div>
  <div class="tray">
    <svg width="14" height="8" viewBox="0 0 14 8"><path d="M1 7l6-5.500L13 7" fill="none" stroke="#fff" stroke-width="1.700"/></svg>
    <svg width="21" height="18" viewBox="0 0 21 18"><path d="M4 14a4 4 0 0 1 0-8 7 7 0 0 1 13-1.500A5 5 0 0 1 17 14z" fill="#0b63bd"/><path d="M1 12a4 4 0 0 1 5-5.500l9 7.500H4z" fill="#2b9df0"/><circle cx="15" cy="12.500" r="5.500" fill="#fff"/><path d="M12 12a3 3 0 0 1 5.500-1.300M18 13a3 3 0 0 1-5.500 1.300M18 8.800v2h-2M12 16.200v-2h2" fill="none" stroke="#0b63bd"/></svg>
    <span class="lang">ENG</span>
    <svg width="20" height="16" viewBox="0 0 20 16" fill="none" stroke="#fff" stroke-width="1.400"><path d="M.7 6a13 13 0 0 1 18.600 0M3.500 9a9.300 9.300 0 0 1 13 0M6.500 12a5 5 0 0 1 7 0"/><circle cx="10" cy="14.200" r="1.100" fill="#fff"/></svg>
    <svg width="20" height="16" viewBox="0 0 20 16" fill="none" stroke="#fff" stroke-width="1.300"><path d="M1 5.500h3L8.500 1.500v13L4 10.500H1zM11 5.500q2 2.500 0 5M13.500 3q4 5 0 10"/><path d="M16 1q5 7 0 14" stroke="#56606b"/></svg>
    <svg width="20" height="17" viewBox="0 0 20 17"><rect x="1" y="4.500" width="16" height="11" rx="2.500" fill="none" stroke="#fff" stroke-width="1.500"/><rect x="6" y="6.500" width="9" height="7" rx="1" fill="#fff"/><rect x="3" y="10" width="4" height="3.500" fill="#fff"/><path d="M18 8h2v4h-2z" fill="#fff"/><path d="M4 0L0 6h3L1.500 11 7 4.500H4z" fill="#fff" stroke="#1e2b38" stroke-width=".7"/></svg>
    <div class="clock"><span>12:00 AM</span><span>12/2/2024</span></div>
    <svg class="bell" width="16" height="20" viewBox="0 0 16 20"><path d="M8 .5c4 0 6 2.800 6 6.500v4l1.800 3.500q.2 1-1 1H1.200q-1.200 0-1-1L2 11V7C2 3.300 4 .5 8 .5zM5.500 17h5q-.5 2-2.500 2t-2.500-2z" fill="#8ce4ff"/></svg>
  </div>
</footer>
</body>
</html>
```
FILE: styles.css
```css
* { box-sizing: border-box; }
html, body { margin: 0; height: 1080px; overflow: hidden; }
body {
  width: 1920px;
  display: grid;
  grid-template-rows: 50px 58px 43px 81px 48px 740px 60px;
  background: #1d1e20;
  color: #e8e8e8;
  font: 15px "Open Sans", "Noto Sans", "DejaVu Sans", sans-serif;
  white-space: nowrap;
}
svg { display: block; flex: none; }
button { font: inherit; color: inherit; border: 0; padding: 0; margin: 0; }
.defs { position: absolute; width: 0; height: 0; }

/* browser tabs */
.tabstrip {
  background: #1f2120;
  display: grid;
  grid-template-columns: 51px 294px 300px 290px 51px 763px 57px 55px 59px;
  align-items: center;
  position: relative;
  z-index: 1;
}
.mid { justify-self: center; }
.tab-search { width: 35px; height: 34px; margin-left: 8px; border-radius: 11px; background: #3a3b3b; display: flex; align-items: center; justify-content: center; }
.tab { display: flex; align-items: center; height: 43px; margin-top: 7px; padding-bottom: 7px; font-size: 14.300px; letter-spacing: 0; color: #c7c7c7; }
.tab .close { color: #d0d0d0; }
.tab-title { flex: 1; }
.tab-gpt { padding-left: 9px; padding-right: 19px; }
.tab-gpt .tab-title { padding-right: 14px; font-size: 15px; letter-spacing: 0; }
.tab-blog { padding: 0 21px 7px 13px; position: relative; letter-spacing: -0.100px; }
.tab-blog::before { content: ""; width: 2px; height: 19px; background: #444; position: absolute; left: -1px; top: 9px; }
.tab-blog .tab-title { padding-left: 9px; }
.tab-active .tab-title { padding-left: 10px; }
.tab-active { background: #3c3c3c; border-radius: 11px 11px 0 0; padding: 0 14px 7px 10px; color: #e3e3e3; position: relative; }
.tab-active::before, .tab-active::after { content: ""; position: absolute; bottom: 0; width: 12px; height: 12px; }
.tab-active::before { left: -12px; background: radial-gradient(circle at 0 0, transparent 11.500px, #3c3c3c 12px); }
.tab-active::after { right: -12px; background: radial-gradient(circle at 100% 0, transparent 11.500px, #3c3c3c 12px); }

/* navigation */
.navbar {
  background: #3c3c3c;
  border-radius: 10px 10px 0 0;
  display: grid;
  grid-template-columns: 43px 45px 47px 1569px 50px 43px 21px 46px 45px;
  padding-left: 6px;
  align-items: center;
  justify-items: center;
  box-shadow: 0 -10px 0 0 #1f2120;
}
.omnibox { width: 1552px; justify-self: start; margin-left: 9px; height: 42px; border-radius: 21px; background: #282828; display: flex; align-items: center; padding: 0 19px 0 7px; gap: 20px; }
.site-info { width: 29px; height: 30px; border-radius: 15px; background: #3c3c3c; display: flex; align-items: center; justify-content: center; margin-right: -10px; }
.url { flex: 1; font-size: 16.500px; letter-spacing: 0.080px; color: #c4c4c4; }
.url b { font-weight: 400; color: #f0f0f0; }
.vsep { width: 2px; height: 19px; background: #5c5c5c; border-radius: 1px; }
.avatar { width: 25px; height: 25px; border-radius: 50%; background: #33691e; color: #fff; text-align: center; font-size: 14px; line-height: 24px; }

.bookmarks { background: #3c3c3c; display: grid; grid-template-columns: 61px 20px 85px 107px 84px 200px 1199px 21px 1fr; align-items: center; padding-bottom: 7px; border-bottom: 1px solid #434446; color: #d4d4d4; font-size: 14px; letter-spacing: -0.080px; }
.apps { margin-left: 23px; }
.bm { display: flex; align-items: center; gap: 8px; }
.zet { gap: 10px; letter-spacing: 0.220px; }
.all { gap: 10px; letter-spacing: 0.030px; }

/* application header */
.apphead { display: grid; grid-template-columns: 85px 1fr 160px; border-bottom: 1px solid #303134; }
.logo { margin: 18px 0 0 20px; }
h1 { margin: 12px 0 0; font-size: 21px; font-weight: 400; line-height: 32px; letter-spacing: 0.220px; color: #e4e4e4; }
.menus { display: grid; grid-template-columns: 45px 48px 56px 80px 65px 55px 288px; align-items: center; margin-top: 2px; height: 32px; font-size: 16px; letter-spacing: -0.050px; }
.unsaved { display: flex; align-items: center; justify-content: space-between; height: 32px; padding: 0 12px 0 10px; border: 1px solid #874a50; border-radius: 3px; background: #4f3134; color: #ff9090; font-size: 14.500px; letter-spacing: -0.150px; }
.head-right { padding: 8px 14px 0 0; display: flex; flex-direction: column; }
.user { display: flex; align-items: center; height: 20px; padding-left: 25px; font-size: 12.500px; letter-spacing: -0.350px; }
.user span { width: 83px; }
.moon { margin: -2px 0 0 9px; }
.share { margin: 6px 0 0 20px; width: 97px; height: 38px; border-radius: 4px; background: #ab5c00; border: 1px solid #2a2a2a; display: flex; align-items: center; justify-content: center; gap: 7px; font: 17.800px "Liberation Sans", sans-serif; color: #eee; }

/* editor toolbar */
.toolbar { display: grid; grid-template-columns: 83px 98px 90px 90px 53px 90px 129px 124px 71px 100px 1fr; align-items: center; padding-bottom: 1px; border-bottom: 1px solid #303134; }
.tg { display: grid; height: 25px; align-items: center; justify-items: center; border-right: 1px solid #2a2b2d; }
.g1 { padding-left: 26px; grid-template-columns: 24px 22px; }
.g2 { padding-left: 12px; grid-template-columns: 44px 40px; }
.g3 { padding-left: 9px; grid-template-columns: 37px 37px; }
.g4 { padding-left: 8px; grid-template-columns: 38px 38px; }
.g5 { padding-left: 4px; }
.g6 { padding-left: 9px; grid-template-columns: 37px 37px; }
.g7 { padding-left: 8px; grid-template-columns: 38px 38px 38px; }
.g8 { padding-left: 8px; grid-template-columns: 36px 10px 8px 36px 10px; }
.g9 { padding-left: 11px; grid-template-columns: 30px 16px; }
.g10 { padding-left: 9px; grid-template-columns: 30px 16px; justify-content: start; border: 0; }
.car { color: #666; }
.lit { color: #8a8a8a; }
.pct { font-size: 17px; letter-spacing: -0.450px; padding-top: 3px; }
.tool-end { justify-self: end; display: flex; gap: 11px; align-items: center; padding-right: 21px; }

/* work area */
.work { display: grid; grid-template-columns: 266px 1353px 301px; min-height: 0; }
.sidebar { border-right: 1px solid #303134; display: grid; grid-template-columns: 256px 9px; grid-template-rows: 674px 66px; }
.palettes { padding-top: 7px; width: 253px; }
.row { height: 43.700px; display: flex; align-items: center; padding-left: 10px; border-top: 1px solid #2c2d30; font-size: 15.400px; font-weight: 600; letter-spacing: -0.170px; }
.row:last-child { border-bottom: 1px solid #2c2d30; }
.row span { width: 131px; padding-top: 2px; margin-left: 9px; }
.row .tri { fill: #666; margin-top: -2px; }
.scratch svg:nth-of-type(3) { margin-left: 10px; }
.scratch svg:nth-of-type(4) { margin-left: 12px; }
.scratch svg:nth-of-type(5) { margin-left: 12px; }
.general .tri { margin-left: -3px; }
.general span { margin-left: 7px; }
.shapes { border-top: 1px solid #2c2d30; height: 399px; padding: 8.500px 0 0 13px; display: grid; grid-template-columns: repeat(5, 45px); grid-template-rows: repeat(9, 42.500px); }
.shapes svg { width: 45px; height: 42px; fill: none; stroke: #e4e4e4; stroke-width: 1.300; }
.shapes text { fill: #ddd; stroke: none; font-family: "Liberation Sans", sans-serif; }
.shapes .faint { stroke: #8a8a8a; stroke-width: 0.800; stroke-dasharray: 3 0.700; }
.shapes .solid { fill: #eee; stroke: none; }
.side-scroll { width: 6px; height: 520px; margin-top: 54px; border-radius: 3px; background: #313235; }
.side-foot { grid-column: 1 / 3; border-top: 1px solid #303134; padding: 15px 0 0 61px; }
.more { width: 143px; height: 35px; border-radius: 4px; background: #4880dc; color: #15181d; font: 18px "Liberation Sans", sans-serif; letter-spacing: -0.050px; -webkit-text-stroke: 0.300px #15181d; }

.center { display: grid; grid-template-rows: 694px 46px; }
.labels text { font: 11.250px "Liberation Sans", sans-serif; fill: #efefef; }
.edges path { marker-end: url(#arr); }
.pages { border-top: 1px solid #303134; display: grid; grid-template-columns: 38px 92px 35px; align-items: stretch; color: #a0a0a0; font-size: 14.500px; }
.pages span { display: flex; align-items: center; justify-content: center; padding-top: 1px; }
.pages .page { gap: 9px; background: #141414; border: solid #303134; border-width: 0 1px; letter-spacing: 0; }

/* format panel */
.format { border-left: 1px solid #303134; color: #a0a0a0; font-size: 14.500px; letter-spacing: -0.150px; }
.ftabs { display: grid; grid-template-columns: 133px 134px 33px; height: 42px; font-size: 15px; font-weight: 700; }
.ftabs span { display: flex; align-items: center; justify-content: center; background: #292929; border: solid #323337; border-width: 0 0 1px 1px; padding: 3px 2px 0 0; }
.ftabs .on { background: none; border: 0; padding: 4px 1px 0 0; }
.ftabs .fx { padding: 0 0 3px; }
.sec { border-bottom: 1px solid #303134; padding-left: 18px; }
h2 { margin: 0; font-size: 14.500px; line-height: 20px; letter-spacing: -0.200px; }
.opt { display: flex; align-items: center; }
.opt .cb { width: 15px; height: 15px; margin-top: -3px; margin-right: 8px; }
.view { height: 208px; padding-top: 20px; }
.r1 { height: 28px; margin-top: 10px; }
.r1 > span:nth-of-type(1) { width: 102px; }
.num, .color, .spin, .btn, .select { border: 1px solid #303134; border-radius: 4px; }
.num { width: 60px; height: 26px; margin-top: 1px; background: #111; color: #eee; font: 15px/24px "Liberation Sans", sans-serif; text-align: right; padding-right: 4px; }
.spin { width: 15px; height: 26px; margin-top: 1px; display: flex; flex-direction: column; align-items: center; justify-content: space-around; }
.color { width: 56px; height: 28px; margin-left: 5px; background: #212122; display: flex; align-items: center; gap: 4px; padding-left: 3px; }
.color i { width: 29px; height: 17px; background: #3a3a3a; border: 1px solid #111; }
.r2 { height: 24px; margin-top: 3px; }
.r2 span { margin-top: -2px; }
.btn { background: #212122; color: #eee; font: 15px "Liberation Sans", sans-serif; letter-spacing: 0; }
.r3 { height: 27px; margin-top: 3px; padding-left: 23px; }
.r3 span { width: 101px; padding-top: 2px; }
.r3 .btn { width: 138px; height: 27px; }
.r4 { height: 24px; margin-top: 6px; }
.r5 { height: 24px; margin-top: 5px; }
.r5 span:first-of-type { width: 107px; }
.options { height: 143px; padding-top: 16px; }
.options .opt { height: 20px; margin-top: 11px; }
.options .opt + .opt { margin-top: 10px; }
.options .cb { margin-top: -1px; }
.paper { height: 115px; padding-top: 16px; }
.select { width: 257px; height: 26px; margin-top: 7px; padding: 0 5px 0 7px; background: #1b1b1c; color: #eee; font: 15px "Liberation Sans", sans-serif; letter-spacing: 0; display: flex; align-items: center; justify-content: space-between; }
.radios { display: flex; align-items: center; padding: 10px 0 0 11px; }
.radios svg { margin: -7px 8px 0 0; }
.radios span { width: 62px; }
.acts { height: 79px; padding-top: 15px; display: grid; grid-template-rows: 24px 24px; row-gap: 2px; }
.acts .btn { width: 262px; }

/* taskbar */
.taskbar {
  border-top: 1px solid #3d4853;
  padding-bottom: 1px;
  background: linear-gradient(90deg, #1f2d37 0, #1f2b36 17%, #14264a 23%, #12244c 29%, #12215a 38%, #12234d 46%, #121f4f 62%, #13244a 73%, #1e2b38 79%, #1e2b38 100%);
  display: grid;
  grid-template-columns: 475px 46px 277px 702px 1fr;
  align-items: center;
  color: #fff;
}
.weather { display: flex; position: relative; padding-left: 21px; height: 58px; align-items: center; }
.weather > svg { margin-top: -6px; }
.wtext { display: flex; flex-direction: column; font-size: 14.300px; line-height: 20px; padding-left: 5px; letter-spacing: -0.300px; align-items: flex-start; }
.wtext .ar { color: #c7ccd2; letter-spacing: 0; font-size: 14.700px; }
.wbadge { position: absolute; left: 39px; top: 6px; width: 20px; height: 20px; border-radius: 50%; background: #ff99a4; color: #222; font-weight: 400; font-size: 13px; line-height: 20px; text-align: center; }
.search { width: 275px; height: 40px; border: 1px solid #505b80; border-radius: 20px; background: linear-gradient(90deg, #34436a, #36416f 60%, #3c4568); display: flex; align-items: center; padding: 0 3px 0 14px; font-size: 16.500px; color: #d3d7e2; letter-spacing: -0.150px; }
.search span { flex: 1; padding-left: 12px; }
.apps-row { display: grid; grid-template-columns: repeat(12, 50px); column-gap: 5px; padding-left: 3px; }
.apps-row span { height: 50px; display: flex; align-items: center; justify-content: center; position: relative; border-radius: 5px; }
.cur { background: #232f5c; border: 1px solid #343f66; }
.run::after { content: ""; position: absolute; left: 21px; bottom: 1px; width: 8px; height: 4px; border-radius: 2px; background: #8f98ab; }
.cur.run::after { left: 14px; bottom: 0; width: 20px; background: #4cc2ff; }
.apps-row b { position: absolute; font-weight: 400; text-align: center; }
.kbadge { left: 25px; top: 3px; width: 20px; height: 20px; border-radius: 50%; background: #33691e; font-size: 12px; line-height: 19px; color: #eee; }
.tbadge { left: 27px; top: 10px; width: 19px; height: 14px; border-radius: 4px; background: #f23c34; font-size: 11px; line-height: 14px; letter-spacing: -0.500px; }
.wabadge { left: 23px; top: 4px; width: 26px; height: 20px; border-radius: 10px; background: #4cc2ff; color: #0c1a28; font-size: 14px; line-height: 20px; letter-spacing: -0.300px; }
.tray { display: grid; grid-template-columns: 37px 44px 51px 30px 30px 20px 90px 16px; align-items: center; padding-left: 64px; }
.lang { font-size: 14.300px; letter-spacing: -0.100px; }
.clock { display: flex; flex-direction: column; text-align: right; font-size: 14.500px; line-height: 20px; letter-spacing: -0.050px; }
.bell { margin-left: 11px; }
```
